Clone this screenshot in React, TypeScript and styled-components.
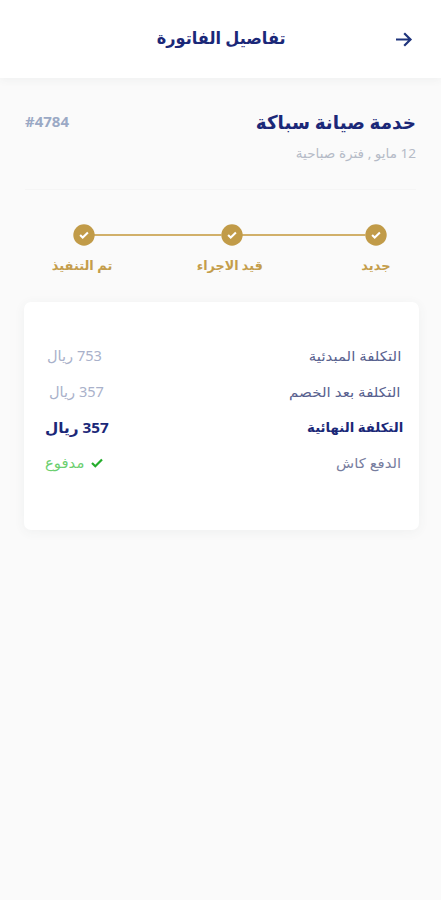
import React from "react";
import styled, { createGlobalStyle } from "styled-components";

const Global = createGlobalStyle`
  * { box-sizing: border-box; }
  body { margin: 0; background: #fafafa; }
`;

const Screen = styled.main`
  width: 441px;
  height: 900px;
  overflow: hidden;
  background: #fafafa;
  font-family: "Noto Sans", "DejaVu Sans", sans-serif;
`;

const Header = styled.header`
  height: 78px;
  display: grid;
  grid-template-columns: 152px 136px 1fr;
  align-items: center;
  padding-bottom: 3px;
  background: #fff;
  box-shadow: 0 2px 8px rgba(60, 80, 80, 0.06);
`;

const BackButton = styled.button`
  width: 20px;
  height: 20px;
  margin: 3px 0 0;
  margin-inline-start: 27px;
  padding: 0;
  border: 0;
  background: none;
  svg { display: block; }
`;

const Phrase = styled.span<{ $size: number; $color: string; $bold?: boolean; $stretch?: number; $end?: boolean; $center?: boolean }>`
  display: inline-block;
  font-size: ${(p) => p.$size}px;
  line-height: 24px;
  font-weight: ${(p) => (p.$bold ? 700 : 400)};
  color: ${(p) => p.$color};
  white-space: nowrap;
  transform: scaleX(${(p) => p.$stretch ?? 1});
  transform-origin: ${(p) => (p.$center ? "center" : p.$end ? "left" : "right")};
`;

const Summary = styled.section`
  height: 112px;
  margin: 0 25px;
  padding-top: 32px;
  border-bottom: 1px solid #f5f5f5;
`;

const SummaryLine = styled.div`
  height: 31px;
  display: flex;
  justify-content: space-between;
`;

const Steps = styled.ol`
  display: grid;
  grid-template-columns: 60px 84px 60px 88px 60px;
  height: 112px;
  margin: 0;
  padding: 34px 35px 0 54px;
  list-style: none;
`;

const Step = styled.li<{ $shift?: number }>`
  display: flex;
  flex-direction: column;
  align-items: center;
  gap: 7px;
  svg { display: block; flex: none; }
  span { margin-inline-start: ${(p) => p.$shift ?? 0}px; }
`;

const Connector = styled.li`
  height: 2px;
  margin: 10px -20px 0;
  background: #d1b06a;
`;

const Card = styled.section`
  height: 228px;
  margin: 0 22px 0 24px;
  padding: 42px 18px 0 21px;
  border-radius: 7px;
  background: #fff;
  box-shadow: 0 2px 12px rgba(60, 80, 80, 0.06);
`;

const CostRow = styled.div<{ $start?: number; $end?: number }>`
  height: 35.5px;
  display: flex;
  justify-content: space-between;
  margin-inline-start: ${(p) => p.$start ?? 0}px;
  margin-inline-end: ${(p) => p.$end ?? 0}px;
`;

const Paid = styled.div`
  display: flex;
  gap: 9px;
  height: 24px;
  align-items: center;
`;

const StepIcon = () => (
  <svg width="22" height="22" viewBox="0 0 22 22">
    <circle cx="11" cy="11" r="10.7" fill="#c19b48" />
    <path d="M7.1 11l2.6 2.5 5.2-4.9" fill="none" stroke="#fff" strokeWidth="2.1" />
  </svg>
);

const gold = "#c49d4b";
const navy = "#1b2878";

export default function App() {
  return (
    <Screen dir="rtl">
      <Global />
      <Header>
        <BackButton aria-label="رجوع">
          <svg width="20" height="20" viewBox="0 0 20 20" fill="none" stroke="#1f347c" strokeWidth="2.2">
            <path d="M2 10.5h14.5M10.2 4.2l6.3 6.3-6.3 6.3" />
          </svg>
        </BackButton>
        <Phrase $size={17} $color={navy} $bold $center $stretch={0.95}>تفاصيل الفاتورة</Phrase>
      </Header>
      <Summary>
        <SummaryLine>
          <Phrase $size={19} $color={navy} $bold $stretch={0.965}>خدمة صيانة سباكة</Phrase>
          <Phrase dir="ltr" $size={14} $color="#9ba9c5" $bold $end $stretch={1.07}>#4784</Phrase>
        </SummaryLine>
        <Phrase $size={13} $color="#b5bbc7" $stretch={1.045}>12 مايو , فترة صباحية</Phrase>
      </Summary>
      <Steps>
        <Step><StepIcon /><Phrase $size={13} $color={gold} $bold $center>جديد</Phrase></Step>
        <Connector />
        <Step $shift={4}><StepIcon /><Phrase $size={13} $color={gold} $bold $center $stretch={0.98}>قيد الاجراء</Phrase></Step>
        <Connector />
        <Step $shift={4}><StepIcon /><Phrase $size={13} $color={gold} $bold $center>تم التنفيذ</Phrase></Step>
      </Steps>
      <Card>
        <CostRow $end={2}>
          <Phrase $size={13.5} $color="#59628f" $stretch={1.11}>التكلفة المبدئية</Phrase>
          <Phrase $size={14} $color="#a9b1ca" $end $stretch={1.04}>753 ريال</Phrase>
        </CostRow>
        <CostRow $end={4}>
          <Phrase $size={13.5} $color="#59628f" $stretch={1.12}>التكلفة بعد الخصم</Phrase>
          <Phrase $size={14} $color="#a9b1ca" $end $stretch={1.04}>357 ريال</Phrase>
        </CostRow>
        <CostRow $start={-2}>
          <Phrase $size={13} $color={navy} $bold $stretch={1.02}>التكلفة النهائية</Phrase>
          <Phrase $size={15} $color={navy} $bold $end $stretch={1.02}>357 ريال</Phrase>
        </CostRow>
        <CostRow>
          <Phrase $size={13.5} $color="#777d9e" $stretch={1.1}>الدفع كاش</Phrase>
          <Paid>
            <svg width="12" height="10" viewBox="0 0 12 10"><path d="M1 5l3.3 3.3L11 1.5" fill="none" stroke="#24ad2b" strokeWidth="2.2" /></svg>
            <Phrase $size={14} $color="#6bcf70" $end $stretch={1.06}>مدفوع</Phrase>
          </Paid>
        </CostRow>
      </Card>
    </Screen>
  );
}
